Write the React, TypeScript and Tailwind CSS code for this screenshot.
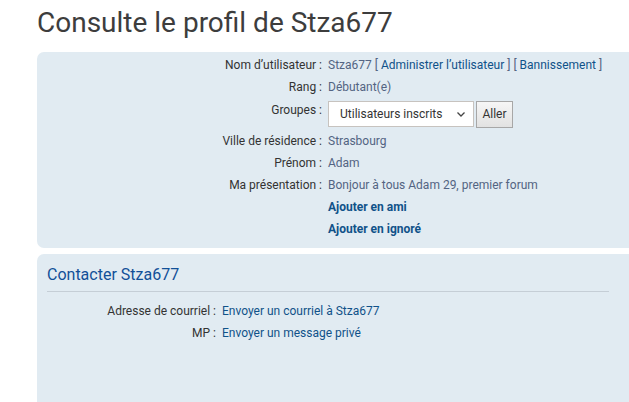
import React from 'react';

const rows: { label: string; value: React.ReactNode }[] = [
  {
    label: "Nom d’utilisateur :",
    value: (
      <span>
        Stza677 [ <a className="text-[#105289]">Administrer l’utilisateur</a> ] [{' '}
        <a className="text-[#105289]">Bannissement</a> ]
      </span>
    ),
  },
  { label: 'Rang :', value: 'Débutant(e)' },
];

const rows2: { label: string; value: React.ReactNode }[] = [
  { label: 'Ville de résidence :', value: 'Strasbourg' },
  { label: 'Prénom :', value: 'Adam' },
  { label: 'Ma présentation :', value: 'Bonjour à tous Adam 29, premier forum' },
];

function Row({ label, value, labelW }: { label: string; value: React.ReactNode; labelW: string }) {
  return (
    <div className="flex h-[22px] items-center">
      <div className={`${labelW} shrink-0 text-right text-[#333333]`}>{label}</div>
      <div className="pl-[6px] text-[#536482]">{value}</div>
    </div>
  );
}

export default function App() {
  return (
    <div className="w-[629px] h-[402px] overflow-hidden bg-white font-['Roboto',sans-serif] text-[12px]">
      <h1 className="pl-[37px] pt-[4px] h-[52px] text-[28px] leading-[38px] text-[#3d3d3d]">
        Consulte le profil de Stza677
      </h1>
      <div className="ml-[37px] w-[620px] rounded-[7px] bg-[#e1ebf2] pt-[2px] pb-[8px]">
        {rows.map((r) => (
          <Row key={r.label} label={r.label} value={r.value} labelW="w-[285px]" />
        ))}
        <div className="flex h-[32px] items-center">
          <div className="w-[285px] shrink-0 self-start pt-[3px] text-right text-[#333333]">Groupes :</div>
          <div className="pl-[6px] flex items-center gap-[2px]">
            <div className="flex h-[26px] w-[146px] items-center justify-between border border-[#c7c3bf] bg-white pl-[11px] pr-[7px] text-[#333333]">
              <span>Utilisateurs inscrits</span>
              <svg width="10" height="10" viewBox="0 0 10 10" fill="none" stroke="#444" strokeWidth="1.3">
                <path d="M1.5 3.5 L5 7 L8.5 3.5" />
              </svg>
            </div>
            <button className="h-[27px] w-[37px] border border-[#a7a7a7] bg-gradient-to-b from-[#f6f6f6] to-[#e2e2e2] text-[#333333]">
              Aller
            </button>
          </div>
        </div>
        {rows2.map((r) => (
          <Row key={r.label} label={r.label} value={r.value} labelW="w-[285px]" />
        ))}
        <Row label="" value={<a className="font-bold text-[#105289]">Ajouter en ami</a>} labelW="w-[285px]" />
        <Row label="" value={<a className="font-bold text-[#105289]">Ajouter en ignoré</a>} labelW="w-[285px]" />
      </div>
      <div className="ml-[37px] mt-[6px] h-[200px] w-[620px] rounded-[7px] bg-[#e1ebf2] px-[10px] pt-[10px]">
        <h3 className="text-[16px] leading-[22px] text-[#115098]">Contacter Stza677</h3>
        <div className="mt-[5px] mb-[8px] w-[562px] border-t border-[#c5ced6]" />
        <div className="-ml-[10px]">
          <Row label="Adresse de courriel :" value={<a className="text-[#105289]">Envoyer un courriel à Stza677</a>} labelW="w-[179px]" />
          <Row label="MP :" value={<a className="text-[#105289]">Envoyer un message privé</a>} labelW="w-[179px]" />
        </div>
      </div>
    </div>
  );
}
